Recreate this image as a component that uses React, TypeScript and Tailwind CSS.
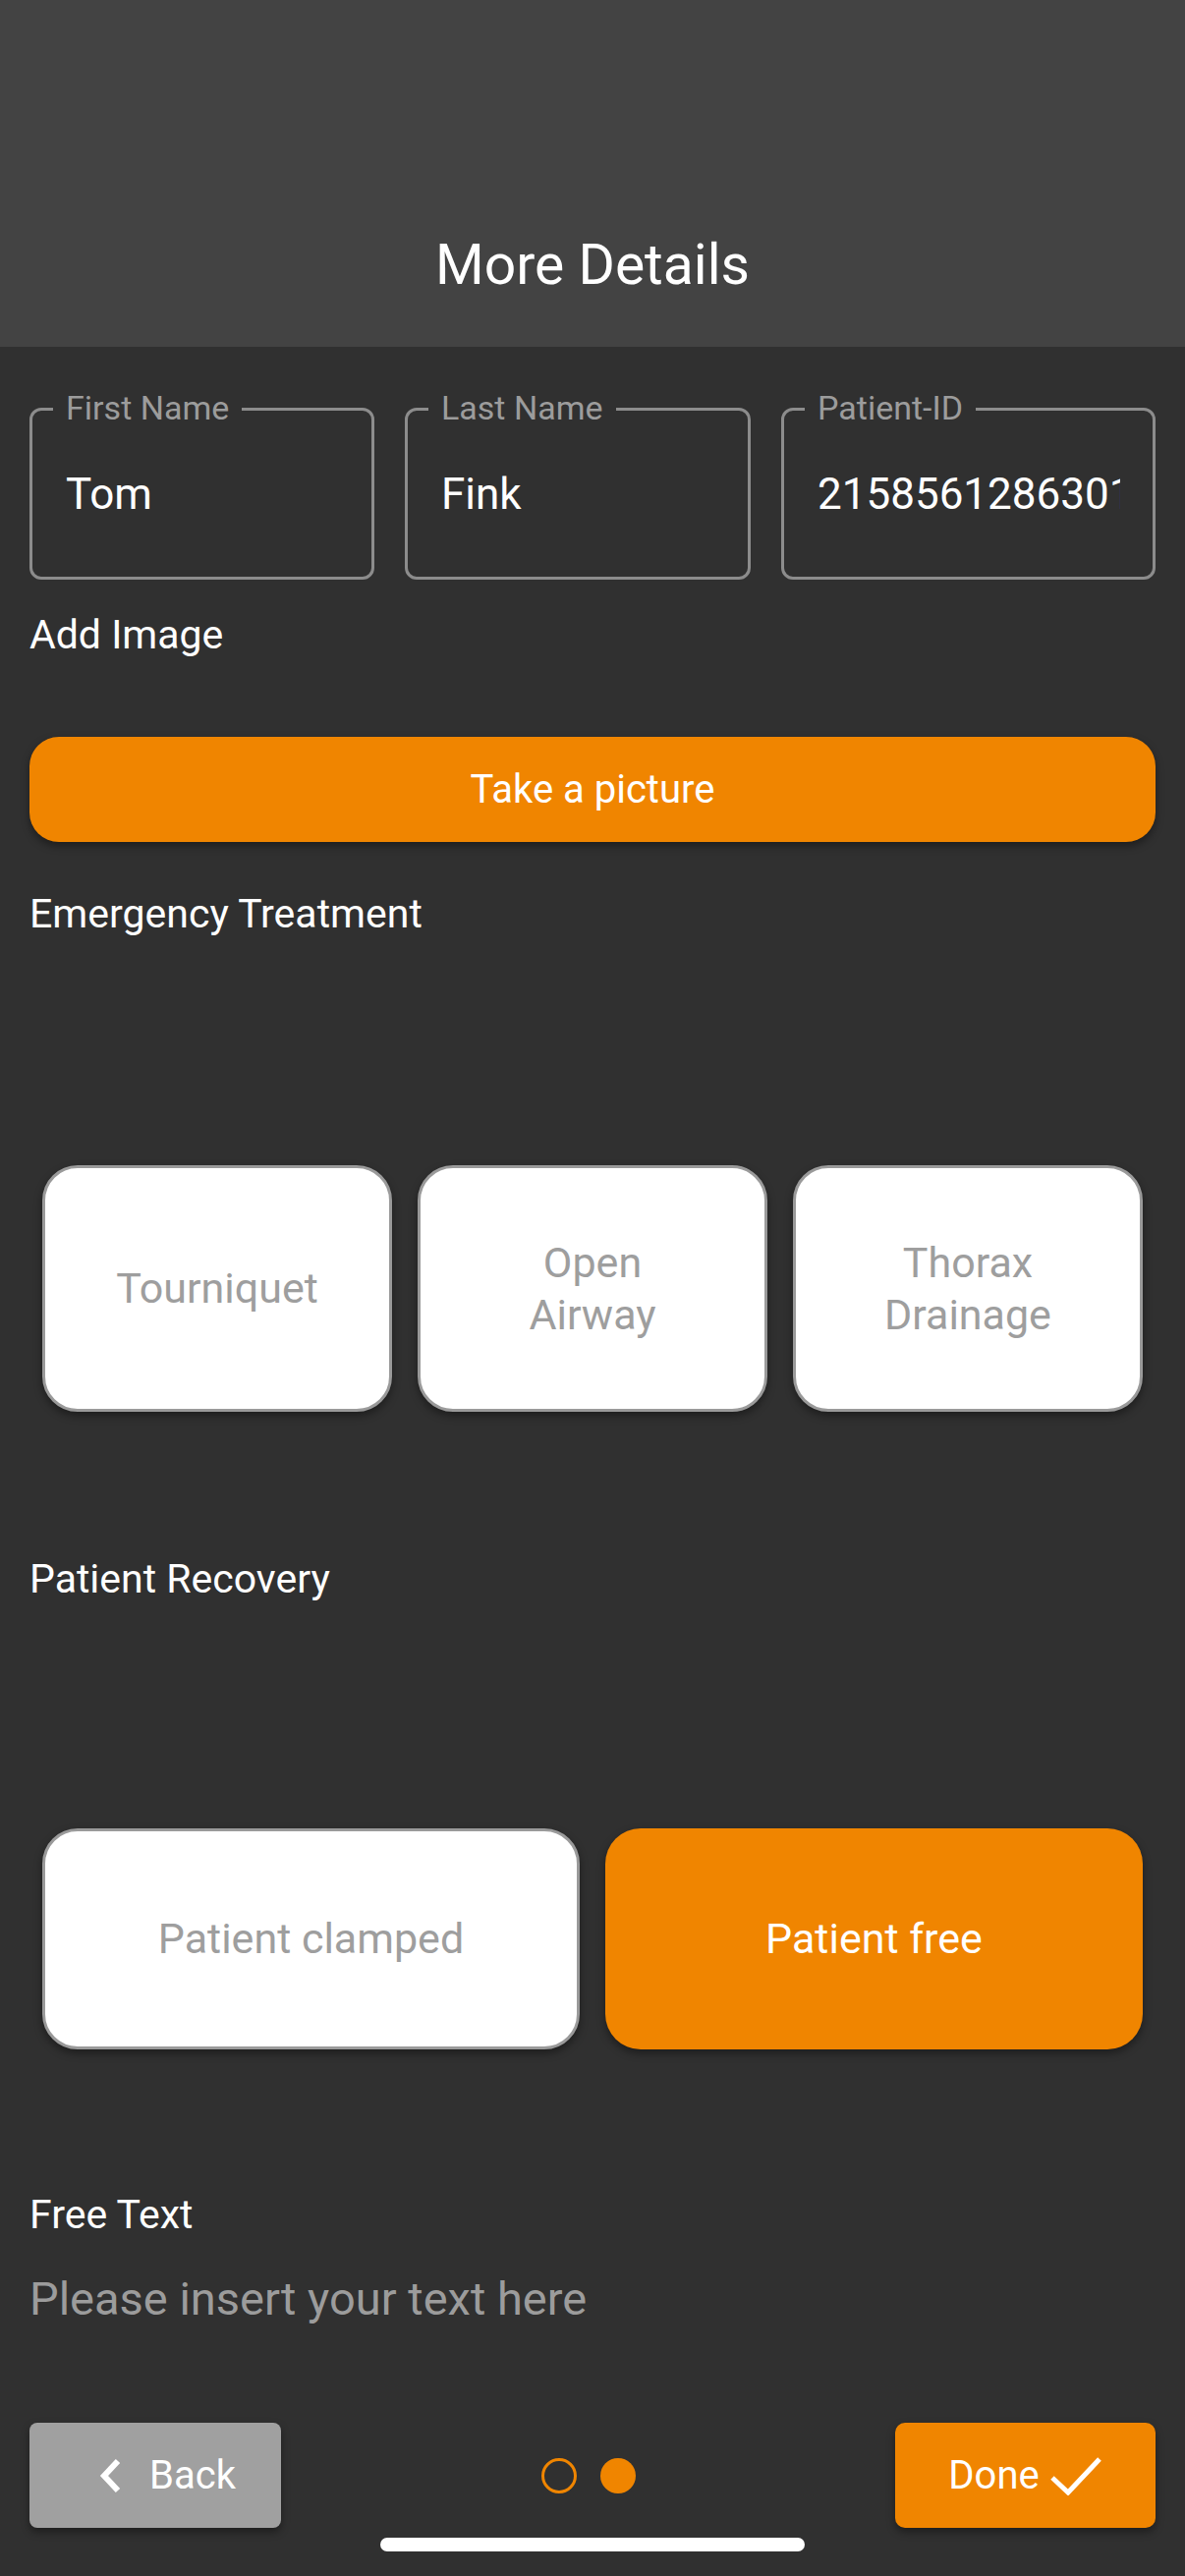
import React from "react";

interface FieldProps {
  label: string;
  value: string;
}

function OutlinedField({ label, value }: FieldProps) {
  return (
    <div className="relative min-w-0 h-[175px] rounded-[12px] border-[3px] border-[#8c8c8c] flex items-center">
      <span className="absolute left-[21px] -top-[3px] -translate-y-1/2 bg-[#303030] px-[13px] text-[34px] leading-[40px] text-[#9c9c9c]">
        {label}
      </span>
      <div className="w-full min-w-0 pl-[34px] pr-[33px]">
        <div className="overflow-hidden whitespace-nowrap text-[44px] leading-[52px] text-white">
          {value}
        </div>
      </div>
    </div>
  );
}

function ChoiceCard({
  lines,
  active = false,
  height,
}: {
  lines: string[];
  active?: boolean;
  height: string;
}) {
  return (
    <div
      className={`${height} flex flex-col items-center justify-center rounded-[36px] shadow-[0_4px_8px_rgba(0,0,0,0.4)] ${
        active
          ? "bg-[#f08500] text-white"
          : "bg-white border-[3px] border-[#9a9a9a] text-[#9e9e9e]"
      }`}
    >
      {lines.map((line) => (
        <span key={line} className="text-[43px] leading-[53px]">
          {line}
        </span>
      ))}
    </div>
  );
}

function SectionLabel({ children, className }: { children: string; className: string }) {
  return (
    <div className={`px-[30px] text-[41px] leading-[48px] text-white ${className}`}>
      {children}
    </div>
  );
}

export default function App() {
  return (
    <div
      className="w-[1206px] h-[2622px] bg-[#303030] flex flex-col overflow-hidden"
      style={{ fontFamily: "Roboto, 'Noto Sans', sans-serif" }}
    >
      {/* Header */}
      <div className="h-[353px] bg-[#434343] flex items-end justify-center pb-[51px] shrink-0">
        <h1 className="text-[57px] leading-[64px] text-white">More Details</h1>
      </div>

      {/* Name fields */}
      <div className="mt-[62px] px-[30px] grid grid-cols-[351px_352px_minmax(0,1fr)] gap-[31px]">
        <OutlinedField label="First Name" value="Tom" />
        <OutlinedField label="Last Name" value="Fink" />
        <OutlinedField label="Patient-ID" value="2158561286301849" />
      </div>

      <SectionLabel className="mt-[32px]">Add Image</SectionLabel>

      <div className="mt-[80px] px-[30px]">
        <button className="w-full h-[107px] rounded-[30px] bg-[#f08500] text-white text-[40px] leading-[48px] shadow-[0_4px_8px_rgba(0,0,0,0.4)]">
          Take a picture
        </button>
      </div>

      <SectionLabel className="mt-[49px]">Emergency Treatment</SectionLabel>

      <div className="mt-[232px] px-[43px] grid grid-cols-3 gap-[26px]">
        <ChoiceCard lines={["Tourniquet"]} height="h-[251px]" />
        <ChoiceCard lines={["Open", "Airway"]} height="h-[251px]" />
        <ChoiceCard lines={["Thorax", "Drainage"]} height="h-[251px]" />
      </div>

      <SectionLabel className="mt-[146px]">Patient Recovery</SectionLabel>

      <div className="mt-[230px] px-[43px] grid grid-cols-2 gap-[26px]">
        <ChoiceCard lines={["Patient clamped"]} height="h-[225px]" />
        <ChoiceCard lines={["Patient free"]} height="h-[225px]" active />
      </div>

      <SectionLabel className="mt-[144px]">Free Text</SectionLabel>

      <div className="mt-[34px] px-[30px] text-[47px] leading-[56px] text-[#9c9c9c]">
        Please insert your text here
      </div>

      {/* Footer navigation */}
      <div className="mt-[98px] px-[30px] flex items-center justify-between">
        <button className="w-[256px] h-[107px] rounded-[8px] bg-[#a0a0a0] flex items-center justify-center gap-[28px] pl-[24px] text-white text-[40px] leading-[48px] shadow-[0_4px_8px_rgba(0,0,0,0.4)]">
          <svg width="24" height="36" viewBox="0 0 24 36" fill="none">
            <path d="M20 3 L6 18 L20 33" stroke="white" strokeWidth="6" />
          </svg>
          <span>Back</span>
        </button>

        <div className="flex items-center gap-[24px]">
          <div className="w-[36px] h-[36px] rounded-full border-[3px] border-[#f08500]" />
          <div className="w-[36px] h-[36px] rounded-full bg-[#f08500]" />
        </div>

        <button className="w-[265px] h-[107px] rounded-[10px] bg-[#f08500] flex items-center justify-center gap-[10px] text-white text-[40px] leading-[48px] shadow-[0_4px_8px_rgba(0,0,0,0.4)]">
          <span>Done</span>
          <svg width="54" height="40" viewBox="0 0 54 40" fill="none">
            <path d="M3 22 L19 37 L51 3" stroke="white" strokeWidth="5" />
          </svg>
        </button>
      </div>

      <div className="mt-[10px] flex justify-center">
        <div className="w-[432px] h-[14px] rounded-full bg-white" />
      </div>
    </div>
  );
}
